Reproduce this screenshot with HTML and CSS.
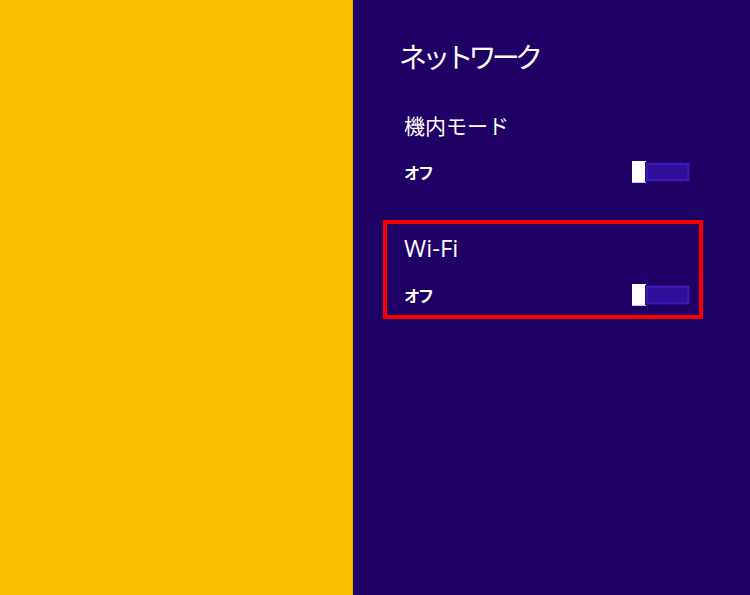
FILE: index.html
```html
<!DOCTYPE html>
<html lang="ja">
<head>
<meta charset="utf-8">
<title>ネットワーク</title>
<link rel="stylesheet" href="styles.css">
</head>
<body>
<div class="screen">
  <div class="backdrop"></div>
  <div class="panel">
    <h1 class="title">ネットワーク</h1>
    <div class="setting">
      <div class="label label-jp">機内モード</div>
      <div class="row">
        <span class="state">オフ</span>
        <span class="toggle"><span class="thumb"></span><span class="track"></span></span>
      </div>
    </div>
    <div class="setting highlighted">
      <div class="label">Wi-Fi</div>
      <div class="row">
        <span class="state">オフ</span>
        <span class="toggle"><span class="thumb"></span><span class="track"></span></span>
      </div>
    </div>
  </div>
</div>
</body>
</html>
```
FILE: styles.css
```css
html, body {
  margin: 0;
  padding: 0;
}
body {
  font-family: "Open Sans", "Noto Sans CJK JP", sans-serif;
  color: #ffffff;
}
.screen {
  display: flex;
  width: 750px;
  height: 595px;
  overflow: hidden;
}
.backdrop {
  width: 352px;
  flex: none;
  background: #fdc000;
  border-right: 1px solid #e8b000;
}
.panel {
  flex: 1;
  background: #1f0065;
  padding: 38px 0 0 30px;
}
.title {
  margin: 0 0 23px 16px;
  font-family: "Noto Sans CJK JP", sans-serif;
  font-weight: 400;
  font-size: 28px;
  line-height: 36px;
  height: 36px;
  letter-spacing: -4.8px;
}
.setting {
  box-sizing: border-box;
  width: 320px;
  border: 4px solid transparent;
  padding: 8px 10px 9px 17px;
}
.setting + .setting {
  margin-top: 24px;
}
.highlighted {
  border-color: #f40000;
}
.label {
  font-size: 24px;
  line-height: 32px;
  height: 32px;
  font-weight: 400;
}
.label-jp {
  font-family: "Noto Sans CJK JP", sans-serif;
  font-size: 21px;
}
.row {
  margin-top: 20px;
  height: 22px;
  display: flex;
  align-items: center;
  justify-content: space-between;
}
.state {
  font-family: "Noto Sans CJK JP", sans-serif;
  font-weight: 700;
  font-size: 16px;
  letter-spacing: -2px;
  line-height: 22px;
}
.toggle {
  display: flex;
  align-items: center;
}
.thumb {
  width: 14px;
  height: 22px;
  background: #ffffff;
  box-shadow: inset 0 -1px 0 #c9c4dc;
}
.track {
  box-sizing: border-box;
  width: 43px;
  height: 18px;
  background: #2f0f9a;
  border: 2px solid #3a19b3;
  box-shadow: 0 0 0 1px #290a86;
}
```
